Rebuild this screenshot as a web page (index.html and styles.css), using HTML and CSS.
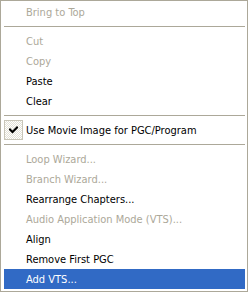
FILE: index.html
```html
<!DOCTYPE html>
<html>
<head>
<meta charset="utf-8">
<link rel="stylesheet" href="styles.css">
</head>
<body>
<div class="menu">
  <div class="item disabled">Bring to Top</div>
  <div class="sep"></div>
  <div class="item disabled">Cut</div>
  <div class="item disabled">Copy</div>
  <div class="item">Paste</div>
  <div class="item">Clear</div>
  <div class="sep"></div>
  <div class="item checked"><span class="check"><svg width="9" height="8" viewBox="0 0 9 8"><path d="M1 3.5 L3.5 6 L8 1.5" fill="none" stroke="#000" stroke-width="2" stroke-linecap="square"/></svg></span>Use Movie Image for PGC/Program</div>
  <div class="sep"></div>
  <div class="item disabled">Loop Wizard...</div>
  <div class="item disabled">Branch Wizard...</div>
  <div class="item">Rearrange Chapters...</div>
  <div class="item disabled">Audio Application Mode (VTS)...</div>
  <div class="item">Align</div>
  <div class="item">Remove First PGC</div>
  <div class="item active">Add VTS...</div>
</div>
</body>
</html>
```
FILE: styles.css
```css
html, body {
  margin: 0;
  padding: 0;
  background: #ffffff;
}
.menu {
  width: 248px;
  height: 292px;
  box-sizing: border-box;
  border: 1px solid #aca899;
  background: #ffffff;
  padding: 1px 2px 2px 3px;
  font-family: "DejaVu Sans Condensed", "DejaVu Sans", sans-serif;
  font-stretch: condensed;
  font-size: 11px;
  color: #000000;
}
.item {
  position: relative;
  height: 20px;
  box-sizing: border-box;
  padding-top: 1px;
  line-height: 19px;
  padding-left: 22px;
  white-space: nowrap;
}
.disabled {
  color: #aca899;
}
.active {
  background: #316ac5;
  color: #ffffff;
}
.sep {
  height: 9px;
  display: flex;
  flex-direction: column;
  justify-content: center;
}
.sep::before {
  content: "";
  display: block;
  height: 1px;
  background: #aca899;
}
.check {
  position: absolute;
  left: 0;
  top: 0;
  width: 17px;
  height: 18px;
  border: 1px solid #c8c5b8;
  background-color: #f4f3ee;
  background-image: repeating-conic-gradient(#e2e0d6 0 25%, #ffffff 0 50%);
  background-size: 2px 2px;
  display: flex;
  align-items: center;
  justify-content: center;
}
.check svg {
  display: block;
}
```
